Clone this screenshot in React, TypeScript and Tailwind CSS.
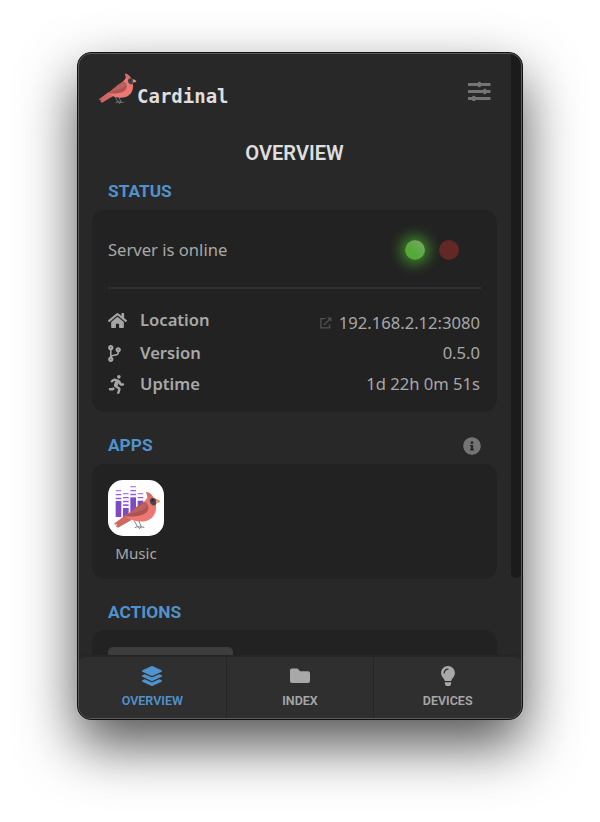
import React from "react";
import {
  FaHome,
  FaCodeBranch,
  FaRunning,
  FaInfoCircle,
  FaLayerGroup,
  FaLightbulb,
} from "react-icons/fa";

function Bird() {
  return (
    <g>
      <path d="M132 271 L143 291 M146 272 L154 291 M134 293 L143 290 L150 296 M143 290 L163 292 M148 296 L155 290" fill="none" stroke="#858585" strokeWidth="3" />
      <path d="M108 254 L72 281 L76 284 L82 281 L78 289 L84 293 L126 269 Z" fill="#cf6763" />
      <path d="M169 186 C179 188 187 195 191 204 L198 211 L198 224 C200 247 191 265 171 272 C154 277 133 276 110 262 L104 259 C122 248 137 231 153 221 C163 215 170 208 172 200 C172 195 169 191 169 186 Z" fill="#ec7773" />
      <path d="M169 186 C179 188 187 195 191 204 L180 207 C177 202 172 200 172 200 C172 195 169 191 169 186 Z" fill="#df6b67" />
      <path d="M169 218 C178 228 177 241 167 249 C151 260 127 261 104 259 C122 248 137 231 153 221 C159 218 164 216 169 218 Z" fill="#ae5350" />
      <path d="M169 218 C174 225 169 235 158 239 C143 246 126 250 115 252 C132 240 145 225 169 218 Z" fill="#b96360" />
      <path d="M180 208 C185 202 193 203 198 207 L199 220 C198 227 190 229 184 223 C180 219 178 213 180 208 Z" fill="#414749" />
      <circle cx="188" cy="211" r="3" fill="#20282b" />
      <path d="M197 207 C204 207 209 211 211 216 L198 220 Z" fill="#ee8c64" />
    </g>
  );
}

const bars: [number, number, number[]][] = [
  [77, 213, [181, 192, 203]],
  [99, 234, [190, 201, 212, 223]],
  [121, 202, [169, 180, 191]],
  [143, 212, [190, 201]],
];

function MusicIcon() {
  return (
    <svg viewBox="54 150 168 168" className="h-14 w-14 rounded-[15px] bg-white">
      {bars.map(([x, top, dashes]) => (
        <g key={x}>
          <rect x={x} y={top} width="17" height={261 - top} fill="#7e49c5" />
          {dashes.map((y, i) => (
            <rect key={y} x={x} y={y} width="17" height={Math.min(3 + i, 5)} rx="1" fill="#9459e5" />
          ))}
        </g>
      ))}
      <Bird />
    </svg>
  );
}

function Sliders() {
  return (
    <svg width="23" height="20" viewBox="0 0 23 20" fill="#747474">
      <rect x="0" y="2" width="22.5" height="3" rx=".6" />
      <rect x="0" y="9" width="22.5" height="3" rx=".6" />
      <rect x="0" y="16" width="22.5" height="3" rx=".6" />
      <rect x="9.7" y=".8" width="3.2" height="5.4" rx="1.3" />
      <rect x="15.2" y="7.8" width="3.2" height="5.4" rx="1.3" />
      <rect x="4.2" y="14.8" width="3.2" height="5.4" rx="1.3" />
    </svg>
  );
}

function OpenIcon() {
  return (
    <svg width="12" height="12" viewBox="0 0 12 12" fill="none" stroke="#505050" strokeWidth="1.3">
      <path d="M5.5 1.7H.9v9.2h8.7V7.6M4 8l6-6" />
      <path d="M7 .5h4.4v4.4z" fill="#505050" stroke="none" />
    </svg>
  );
}

function Row({ icon, label, className, children }: { icon: React.ReactNode; label: string; className: string; children: React.ReactNode }) {
  return (
    <div className={`flex items-center whitespace-nowrap ${className}`}>
      <span className="w-8 text-[#a6a6a6]">{icon}</span>
      <span className="font-semibold">{label}</span>
      <span className="mr-px ml-auto flex items-center gap-[7px]">{children}</span>
    </div>
  );
}

function Tab({ icon, label, active = false }: { icon: React.ReactNode; label: string; active?: boolean }) {
  return (
    <div className={`flex flex-1 flex-col items-center border-r border-[#252525] pt-[9px] last:border-r-0 ${active ? "text-[#5093cc]" : "text-[#a8a8a8]"}`}>
      <div className="flex h-5 items-center">{icon}</div>
      <div className="mt-[7px] font-[Roboto,sans-serif] text-[12.5px] leading-[16px] font-semibold">{label}</div>
    </div>
  );
}

const heading = "font-[Roboto,sans-serif] text-[17.3px] leading-[20px] font-bold text-[#5093cc]";

export default function App() {
  return (
    <div className="h-[822px] w-[600px] overflow-hidden bg-white px-[77px] pt-[52px] font-['Noto_Sans',sans-serif] text-[16.6px] leading-[22px] text-[#a8a8a8]">
      <div className="h-[668px] w-[446px] rounded-[14px] border border-[#111111] bg-[#282828] shadow-[0_25px_56px_rgba(0,0,0,0.68)]">
        <div className="flex h-[666px] flex-col overflow-hidden rounded-[13px] border border-[#5a5a5a]">
          <div className="flex h-[601px] shrink-0 overflow-hidden">
            <main className="w-[432px] pl-[13px]">
              <header className="flex h-[80px] pl-[7px]">
                <svg viewBox="70 184 142 114" className="mt-[19px] -ml-px h-[31px] w-[39px]"><Bird /></svg>
                <h1 className="mt-[30px] font-['DejaVu_Sans_Mono',monospace] text-[19px] leading-[24px] font-bold text-[#dedede]">Cardinal</h1>
                <div className="mt-[27px] mr-[20px] ml-auto"><Sliders /></div>
              </header>
              <h2 className="mt-[7px] w-[405px] text-center font-[Roboto,sans-serif] text-[20.1px] leading-[24px] font-semibold text-[#dedede]">OVERVIEW</h2>
              <h3 className={`mt-[16px] ml-4 ${heading}`}>STATUS</h3>
              <section className="mt-[9px] h-[202px] w-[405px] rounded-[13px] bg-[#222222] px-4">
                <div className="flex h-[79px] items-center border-b-2 border-[#2f2f2f] pt-[3px] pr-[22px]">
                  <span className="mr-auto">Server is online</span>
                  <span className="h-5 w-5 rounded-full bg-linear-to-tr from-[#53aa36] from-40% to-[#7ba76a] shadow-[0_0_14px_4px_#3f8c2a]" />
                  <span className="ml-[14px] h-5 w-5 rounded-full bg-[#632824]" />
                </div>
                <Row className="mt-[19px] h-[24px]" label="Location" icon={<FaHome size={19} />}>
                  <span className="mt-[5px]"><OpenIcon /></span><span className="mt-[5px]">192.168.2.12:3080</span>
                </Row>
                <Row className="mt-[9px] h-[24px]" label="Version" icon={<FaCodeBranch size={17} className="-ml-[2px]" />}>0.5.0</Row>
                <Row className="mt-[7px] h-[24px]" label="Uptime" icon={<FaRunning size={19} className="-ml-px" />}>1d 22h 0m 51s</Row>
              </section>
              <div className="mt-[23px] flex h-[20px] w-[405px] items-center justify-between px-4">
                <h3 className={heading}>APPS</h3>
                <FaInfoCircle size={18} className="mt-[2px] text-[#747474]" />
              </div>
              <section className="mt-[9px] h-[115px] w-[405px] rounded-[13px] bg-[#222222] px-4 pt-4">
                <div className="flex w-14 flex-col items-center">
                  <MusicIcon />
                  <span className="mt-[6px] text-[15.2px] leading-[22px]">Music</span>
                </div>
              </section>
              <h3 className={`mt-[23px] ml-4 ${heading}`}>ACTIONS</h3>
              <section className="mt-[8px] h-[115px] w-[405px] rounded-[13px] bg-[#222222] px-4 pt-[17px]">
                <div className="h-9 w-[125px] rounded-[5px] bg-[#3d3d3d]" />
              </section>
            </main>
            <div className="h-[524px] w-[10px] rounded-b-[5px] bg-[#1b1b1b]" />
          </div>
          <nav className="flex flex-1 rounded-t-[7px] border-t-2 border-[#252525] bg-[#2f2f2f]">
            <Tab active label="OVERVIEW" icon={<FaLayerGroup size={20} />} />
            <Tab label="INDEX" icon={
              <svg width="20" height="16" viewBox="0 0 20 16" fill="currentColor"><path d="M2 .5h5.5l2.7 2.7H18a2 2 0 0 1 2 2V13a2 2 0 0 1-2 2H2a2 2 0 0 1-2-2V2.5a2 2 0 0 1 2-2Z" /></svg>
            } />
            <Tab label="DEVICES" icon={<FaLightbulb size={20} />} />
          </nav>
        </div>
      </div>
    </div>
  );
}
